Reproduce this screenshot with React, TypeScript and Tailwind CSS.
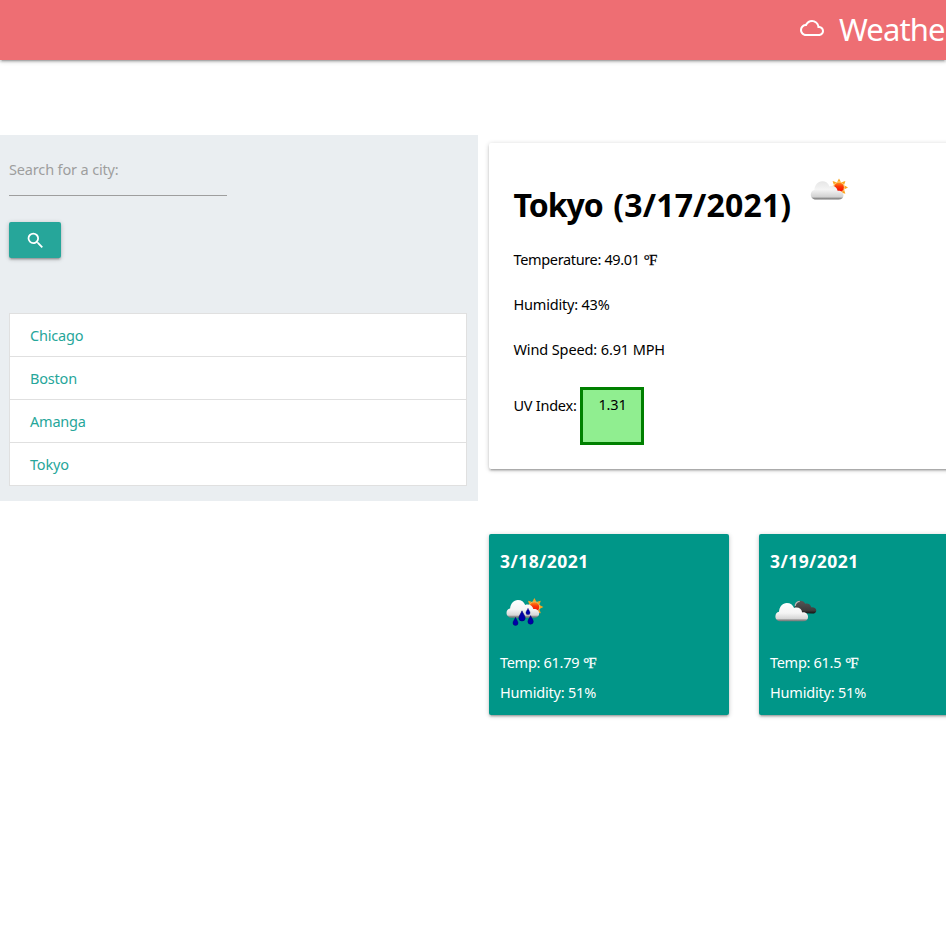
import { MdCloudQueue, MdSearch } from "react-icons/md";

const cities = ["Chicago", "Boston", "Amanga", "Tokyo"];

function Fahrenheit() {
  return <span className="inline-block text-[15px] leading-none tracking-[-0.8px] font-['Liberation_Serif',serif] [-webkit-text-stroke:0.3px_currentColor]">°F</span>;
}

function Gradients() {
  return (
    <svg width="0" height="0" className="absolute" aria-hidden="true">
      <defs>
        <linearGradient id="cloud" x1="0" y1="0" x2="0" y2="1">
          <stop offset="0" stopColor="#ffffff" />
          <stop offset="0.55" stopColor="#f4f4f4" />
          <stop offset="0.85" stopColor="#d6d6d6" />
          <stop offset="0.93" stopColor="#8c8c8c" />
          <stop offset="1" stopColor="#777777" />
        </linearGradient>
        <linearGradient id="paleCloud" x1="0" y1="0" x2="0" y2="1">
          <stop offset="0" stopColor="#e6e6e6" />
          <stop offset="0.45" stopColor="#f4f4f4" />
          <stop offset="0.85" stopColor="#d2d2d2" />
          <stop offset="0.93" stopColor="#929292" />
          <stop offset="1" stopColor="#707070" />
        </linearGradient>
        <linearGradient id="dark" x1="0" y1="0" x2="0" y2="1">
          <stop offset="0" stopColor="#555555" />
          <stop offset="0.75" stopColor="#3c3c3c" />
          <stop offset="1" stopColor="#111111" />
        </linearGradient>
        <linearGradient id="sun" x1="0" y1="0" x2="0" y2="1">
          <stop offset="0" stopColor="#ff9a1c" />
          <stop offset="0.4" stopColor="#fb3a08" />
          <stop offset="1" stopColor="#f40000" />
        </linearGradient>
      </defs>
    </svg>
  );
}

const rays = [0, 45, 90, 135, 180, 225, 270, 315];

function Sun({ x, y }: { x: number; y: number }) {
  return (
    <g transform={`translate(${x} ${y})`}>
      {rays.map((angle) => (
        <path key={angle} d="M-1.8-5.6 0-9 1.8-5.600z" fill="#fba41c" transform={`rotate(${angle})`} />
      ))}
      <circle r="5.300" fill="url(#sun)" stroke="#ffc55c" strokeWidth="1" />
    </g>
  );
}

const cloudShape =
  "M6 19C2.7 19 .6 17 .6 14.2c0-2.6 1.4-4.3 3.6-4.7C4.5 4.4 7.7.7 12 .7c3.600 0 6.100 1.900 7.300 5.100 3.600-1.400 7.500.3 8.100 4.300 3.300-.4 5.900 1.500 5.900 4.600 0 2.700-2.100 4.300-4.900 4.300z";

function FewClouds() {
  return (
    <svg width="50" height="50" viewBox="0 0 50 50">
      <Sun x={34} y={17.400} />
      <path d={cloudShape} transform="translate(5.200 10.600)" fill="url(#paleCloud)" />
    </svg>
  );
}

function Drop({ x, y, s }: { x: number; y: number; s: number }) {
  return (
    <path
      transform={`translate(${x} ${y}) scale(${s})`}
      d="M0-5.200C.8-2.900 3.200-.2 3.200 1.900a3.200 3.100 0 0 1-6.400 0C-3.200-.2-.8-2.900 0-5.200z"
      fill="#0000a8"
      stroke="#000066"
      strokeWidth=".5"
    />
  );
}

function RainSun() {
  return (
    <svg width="50" height="50" viewBox="0 0 50 50">
      <Sun x={34.400} y={18} />
      <path d={cloudShape} transform="translate(5.900 10.200) scale(1 .98)" fill="url(#cloud)" />
      <Drop x={22} y={27} s={1} />
      <Drop x={28} y={22.600} s={0.65} />
      <Drop x={15.500} y={32.500} s={0.8} />
      <Drop x={30.600} y={31} s={0.85} />
    </svg>
  );
}

function BrokenClouds() {
  return (
    <svg width="50" height="50" viewBox="0 0 50 50">
      <path
        d="M26 24c-1.500-2-1.300-5-1.300-6.400 0-3.400 2.300-5.800 5.400-5.800 2.600 0 4.200 1.200 5.200 2.900 2.800-.7 5.500.8 5.900 3.600 3.200-.3 5.100 1.200 5.100 3.200S44.700 24.600 42.500 24.600z"
        fill="url(#dark)"
      />
      <path d="M25.200 16.800c.3-2.500 2.200-4.300 4.500-4.500" fill="none" stroke="#b8b8b8" strokeWidth="1.300" />
      <path d={cloudShape} transform="translate(4.800 13.300)" fill="url(#cloud)" />
    </svg>
  );
}

const shadow = "shadow-[0_2px_2px_0_rgba(0,0,0,0.14),0_3px_1px_-2px_rgba(0,0,0,0.12),0_1px_5px_0_rgba(0,0,0,0.2)]";

const forecast = [
  { date: "3/18/2021", temp: "61.79", humidity: "51%", Icon: RainSun },
  { date: "3/19/2021", temp: "61.5", humidity: "51%", Icon: BrokenClouds },
];

export default function App() {
  return (
    <div className="h-[945px] w-full overflow-hidden bg-white font-['Noto_Sans','Open_Sans',sans-serif] text-[14.500px] tracking-[-0.2px] text-black">
      <Gradients />
      <nav className={`flex h-[60px] items-center overflow-hidden bg-[#ee6e73] pl-[800px] text-white ${shadow}`}>
        <MdCloudQueue size={24} className="mr-[15px] shrink-0 -translate-y-[2px]" />
        <span className="shrink-0 -translate-y-px text-[31px] font-normal tracking-[-0.9px] whitespace-nowrap">Weather</span>
      </nav>

      <div className="flex pt-[75px]">
        <aside className="h-[366px] w-[478px] shrink-0 bg-[#eaeef1] px-[9px]">
          <div className="flex h-[61px] w-[218px] items-center border-b border-[#9e9e9e] pt-[10px] tracking-[-0.15px] text-[#9e9e9e]">
            <label>Search for a city:</label>
          </div>
          <button className={`mt-[26px] flex h-9 w-[52px] items-center justify-center rounded-[2px] bg-[#26a69a] text-white ${shadow}`}>
            <MdSearch size={21} />
          </button>
          <ul className="mt-[55px] mr-[2px] border border-[#e0e0e0] bg-white">
            {cities.map((city) => (
              <li key={city} className="flex h-[43px] items-center border-b border-[#e0e0e0] px-5 pt-[2px] text-[#26a69a] last:h-[42px] last:border-b-0">
                {city}
              </li>
            ))}
          </ul>
        </aside>

        <main className="ml-[11px] w-[750px] shrink-0">
          <section className={`mt-2 h-[326px] rounded-[2px] bg-white pt-[22px] pr-[25px] pl-[24.5px] ${shadow}`}>
            <div className="flex h-[80px]">
              <h1 className="w-[280px] pt-[16px] text-[32px] leading-[48px] font-bold tracking-[0.15px] whitespace-nowrap">
                <span className="mr-[2px] tracking-[-1px]">Tokyo</span> (3/17/2021)
              </h1>
              <div className="mt-[5px] ml-[11px]"><FewClouds /></div>
            </div>
            <p className="flex h-[30px] items-center gap-1 tracking-[-0.35px]">Temperature: 49.01 <Fahrenheit /></p>
            <p className="mt-[15px] flex h-[30px] items-center">Humidity: 43%</p>
            <p className="mt-[15px] flex h-[30px] items-center tracking-[-0.12px]">Wind Speed: 6.91 MPH</p>
            <div className="mt-[22px] flex">
              <span className="w-[66.5px] pt-[8px] tracking-[-0.25px] whitespace-nowrap">UV Index:</span>
              <div className="h-[58px] w-16 border-[3px] border-[#008000] bg-[#90ee90] pt-[4px] pl-px text-center">1.31</div>
            </div>
          </section>

          <div className="mt-[65px] flex gap-[30px]">
            {forecast.map(({ date, temp, humidity, Icon }) => (
              <article key={date} className={`h-[181px] w-60 shrink-0 rounded-[2px] bg-[#009688] px-[11px] pt-[14px] text-white ${shadow}`}>
                <h2 className="h-[26px] text-[17.5px] leading-[26px] font-bold tracking-[0.45px]">{date}</h2>
                <div className="mt-[15px] h-[59px]"><Icon /></div>
                <p className="flex h-[30px] items-center gap-1 tracking-[-0.3px]">Temp: {temp} <Fahrenheit /></p>
                <p className="flex h-[30px] items-center">Humidity: {humidity}</p>
              </article>
            ))}
          </div>
        </main>
      </div>
    </div>
  );
}
